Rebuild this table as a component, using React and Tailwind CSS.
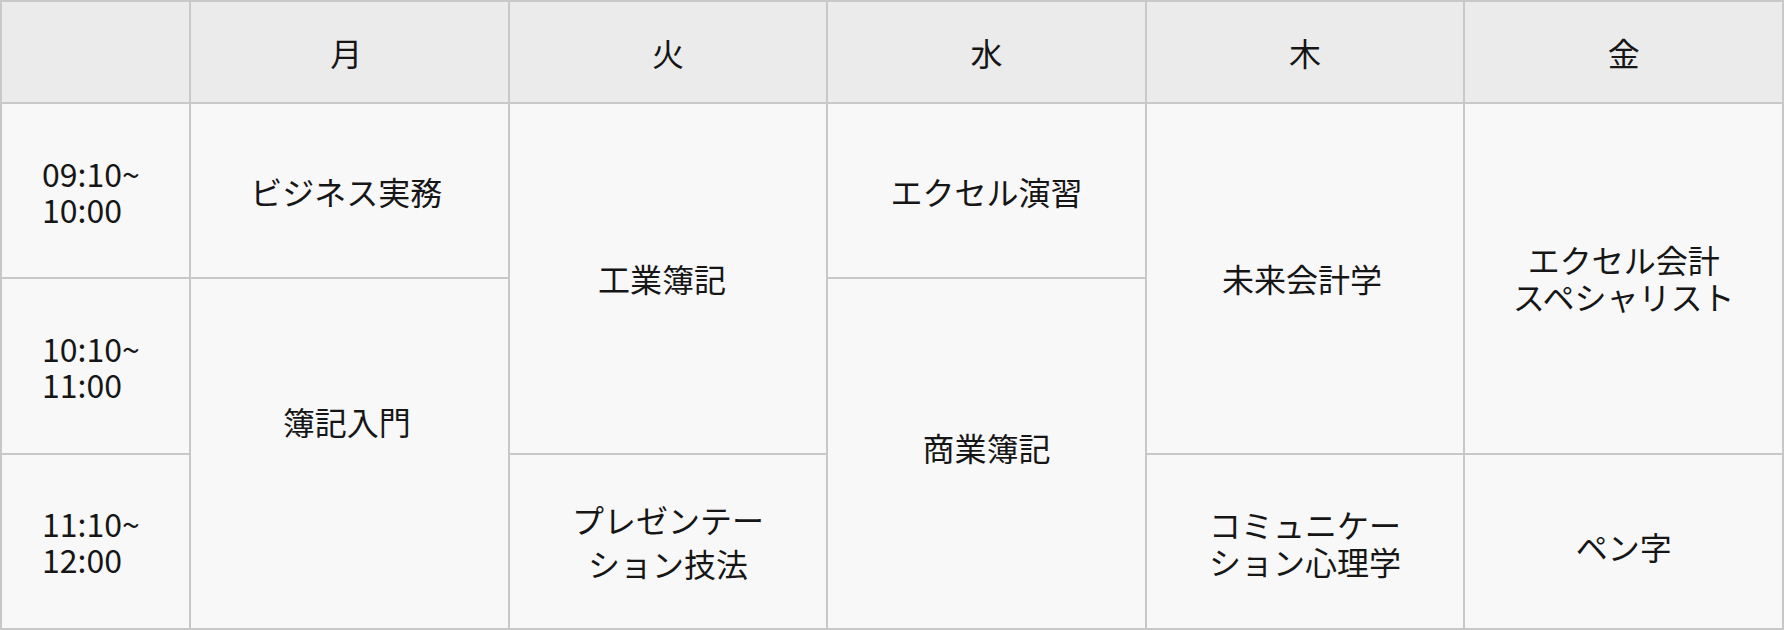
import React from 'react';

const days = ['月', '火', '水', '木', '金'];

const Cell = ({ children, className = '' }) => (
  <div className={`flex items-center justify-center bg-[#f8f8f8] text-center ${className}`}>
    {children}
  </div>
);

const TimeCell = ({ from, to }) => (
  <div className="flex items-center bg-[#f8f8f8] pl-[40px]">
    <div className="text-left leading-[36px]">
      {from}
      <br />
      {to}
    </div>
  </div>
);

export default function App() {
  return (
    <div
      className="w-[1784px] h-[630px] bg-white text-[#161616] text-[32px]"
      style={{ fontFamily: '"Noto Sans CJK JP", "Noto Sans", sans-serif' }}
    >
      <div className="grid h-full grid-cols-[187px_repeat(5,1fr)] grid-rows-[100px_repeat(3,1fr)] gap-[2px] border-2 border-[#c8c8c8] bg-[#c8c8c8]">
        {/* header */}
        <div className="bg-[#ebebeb]" />
        {days.map((d, i) => (
          <div
            key={d}
            className={`flex items-center justify-center bg-[#ebebeb] ${i === 0 ? 'pr-[6px]' : ''}`}
          >
            {d}
          </div>
        ))}

        {/* 1限 */}
        <TimeCell from="09:10~" to="10:00" />
        <Cell className="pr-[6px]">ビジネス実務</Cell>
        <Cell className="row-span-2 pr-[12px]">工業簿記</Cell>
        <Cell>エクセル演習</Cell>
        <Cell className="row-span-2 pr-[6px]">未来会計学</Cell>
        <Cell className="row-span-2 leading-[37px]">
          エクセル会計
          <br />
          スペシャリスト
        </Cell>

        {/* 2限 */}
        <TimeCell from="10:10~" to="11:00" />
        <Cell className="row-span-2 pb-[66px] pr-[5px]">簿記入門</Cell>
        <Cell className="row-span-2 pb-[14px]">商業簿記</Cell>

        {/* 3限 */}
        <TimeCell from="11:10~" to="12:00" />
        <Cell className="leading-[44px]">
          プレゼンテー
          <br />
          ション技法
        </Cell>
        <Cell className="pt-[4px] leading-[37px]">
          コミュニケー
          <br />
          ション心理学
        </Cell>
        <Cell className="pt-[10px]">ペン字</Cell>
      </div>
    </div>
  );
}
